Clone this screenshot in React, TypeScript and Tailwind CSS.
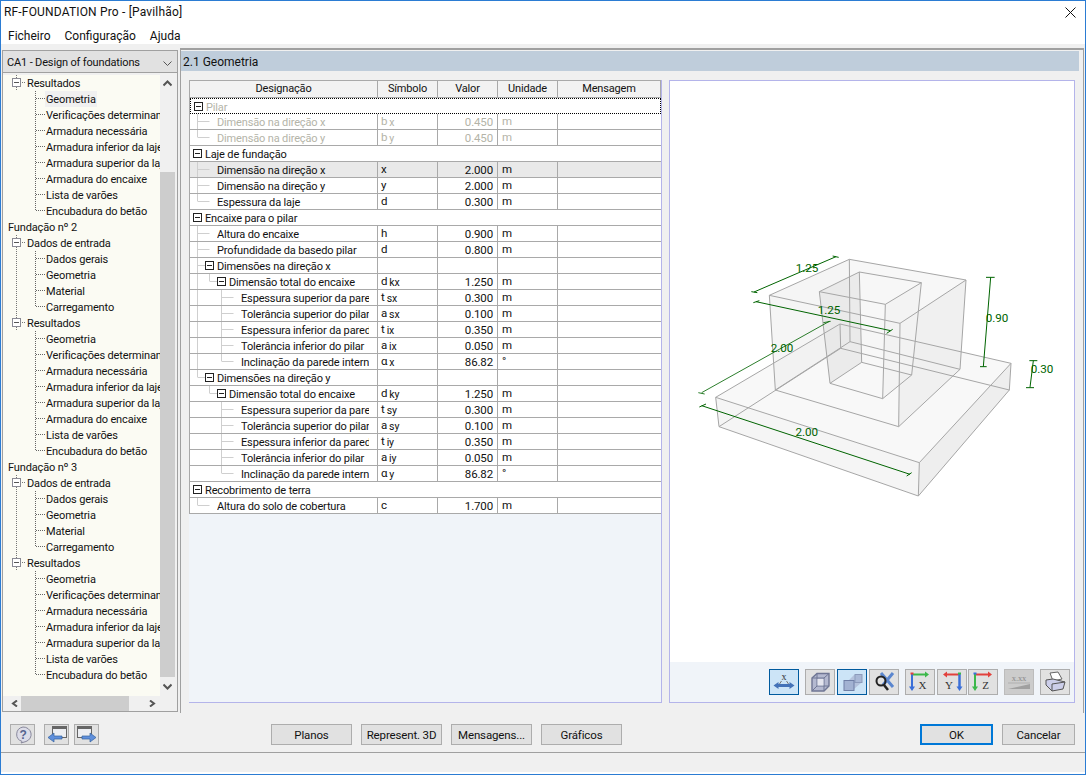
import type { ReactNode } from "react";

const results = [
  "Geometria",
  "Verificações determinantes",
  "Armadura necessária",
  "Armadura inferior da laje",
  "Armadura superior da laje",
  "Armadura do encaixe",
  "Lista de varões",
  "Encubadura do betão",
];
const inputs = ["Dados gerais", "Geometria", "Material", "Carregamento"];

type TreeRow = { text: string; kind: "root" | "group" | "leaf"; last?: boolean; outer?: boolean; selected?: boolean };

function foundation(n: number, items: string[]): TreeRow[] {
  return [
    { text: `Fundação nº ${n}`, kind: "root" },
    { text: "Dados de entrada", kind: "group" },
    ...inputs.map((t, i) => ({ text: t, kind: "leaf" as const, outer: true, last: i === inputs.length - 1 })),
    { text: "Resultados", kind: "group" },
    ...items.map((t, i) => ({ text: t, kind: "leaf" as const, last: i === items.length - 1 })),
  ];
}

const treeRows: TreeRow[] = [
  { text: "Resultados", kind: "group" },
  ...results.map((t, i) => ({ text: t, kind: "leaf" as const, selected: i === 0, last: i === results.length - 1 })),
  ...foundation(2, results),
  ...foundation(3, results.filter((t) => t !== "Armadura do encaixe")),
];

type Row = {
  name: string;
  level: 0 | 1 | 2 | 3;
  group?: boolean;
  last?: boolean;
  cont?: boolean;
  sym?: string;
  sub?: string;
  value?: string;
  unit?: string;
  faded?: boolean;
  hilite?: boolean;
  focus?: boolean;
};

const detail = (axis: "x" | "y", k: string): Row[] => [
  { name: `Dimensões na direção ${axis}`, level: 1, group: true, last: axis === "y" },
  { name: "Dimensão total do encaixe", level: 2, group: true, last: true, cont: axis === "x", sym: "d", sub: `k${axis}`, value: "1.250", unit: "m" },
  { name: "Espessura superior da parede", level: 3, cont: axis === "x", sym: "t", sub: `s${axis}`, value: "0.300", unit: "m" },
  { name: "Tolerância superior do pilar", level: 3, cont: axis === "x", sym: "a", sub: `s${axis}`, value: "0.100", unit: "m" },
  { name: "Espessura inferior da parede", level: 3, cont: axis === "x", sym: "t", sub: `i${axis}`, value: "0.350", unit: "m" },
  { name: "Tolerância inferior do pilar", level: 3, cont: axis === "x", sym: "a", sub: `i${axis}`, value: "0.050", unit: "m" },
  { name: "Inclinação da parede interna", level: 3, last: true, cont: axis === "x", sym: "α", sub: k, value: "86.82", unit: "°" },
];

const rows: Row[] = [
  { name: "Pilar", level: 0, group: true, faded: true, focus: true },
  { name: "Dimensão na direção x", level: 1, sym: "b", sub: "x", value: "0.450", unit: "m", faded: true },
  { name: "Dimensão na direção y", level: 1, last: true, sym: "b", sub: "y", value: "0.450", unit: "m", faded: true },
  { name: "Laje de fundação", level: 0, group: true },
  { name: "Dimensão na direção x", level: 1, sym: "x", value: "2.000", unit: "m", hilite: true },
  { name: "Dimensão na direção y", level: 1, sym: "y", value: "2.000", unit: "m" },
  { name: "Espessura da laje", level: 1, last: true, sym: "d", value: "0.300", unit: "m" },
  { name: "Encaixe para o pilar", level: 0, group: true },
  { name: "Altura do encaixe", level: 1, sym: "h", value: "0.900", unit: "m" },
  { name: "Profundidade da basedo pilar", level: 1, sym: "d", value: "0.800", unit: "m" },
  ...detail("x", "x"),
  ...detail("y", "y"),
  { name: "Recobrimento de terra", level: 0, group: true },
  { name: "Altura do solo de cobertura", level: 1, last: true, sym: "c", value: "1.700", unit: "m" },
];

function Box({ x, dark }: { x: number; dark?: boolean }) {
  return (
    <>
      <rect x={x + 0.5} y={3.5} width={8} height={8} fill="#fff" stroke={dark ? "#222" : "#8a8a94"} />
      <path d={`M${x + 2} 7.5h5`} stroke={dark ? "#222" : "#555"} />
    </>
  );
}

function TreeGlyph({ row }: { row: TreeRow }) {
  if (row.kind === "root") return <span className="w-[5px] shrink-0" />;
  if (row.kind === "group") {
    return (
      <svg width="24" height="16" className="shrink-0">
        <path d="M13.5 0v3M13.5 12v4M19 7.5h4" stroke="#777" strokeDasharray="1 1" fill="none" />
        <Box x={9} />
      </svg>
    );
  }
  return (
    <svg width="43" height="16" className="shrink-0">
      {row.outer && <path d="M13.5 0v16" stroke="#777" strokeDasharray="1 1" fill="none" />}
      <path d={`M32.5 0v${row.last ? 8 : 16}M33 7.5h9`} stroke="#666" strokeDasharray="1 1" fill="none" />
    </svg>
  );
}

function TableGlyph({ row }: { row: Row }) {
  const stroke = "#cfcfcf";
  if (row.level === 0) {
    return (
      <svg width="15" height="15" className="shrink-0">
        <Box x={3} dark />
      </svg>
    );
  }
  const width = row.level === 1 ? 27 : row.level === 2 ? 39 : 51;
  const parent = row.level === 1 ? 7.5 : row.level === 2 ? 19.5 : 31.5;
  const end = row.group ? parent + 8 : parent + 12;
  return (
    <svg width={width} height="15" className="shrink-0">
      {row.cont && <path d="M7.5 0v15" stroke={stroke} />}
      <path d={`M${parent} 0v${row.last ? 7 : 15}M${parent} 7.5H${end}`} stroke={stroke} fill="none" />
      {row.group && <Box x={parent + 7.5} dark />}
    </svg>
  );
}

function TableRow({ row }: { row: Row }) {
  const tone = row.faded ? "text-[#b4b4a8]" : "text-[#111]";
  const bg = row.hilite ? "bg-[#e9e9e9]" : "bg-white";
  if (row.group && row.level === 0) {
    return (
      <div
        className={`col-span-5 flex h-4 items-start whitespace-nowrap ${tone} ${bg} ${
          row.focus ? "border border-dotted border-black" : "border-b border-[#a9a9a9]"
        }`}
      >
        <TableGlyph row={row} />
        <span className="h-[14px] leading-[18px]">{row.name}</span>
      </div>
    );
  }
  const cell = `h-4 border-b border-r border-[#a9a9a9] ${bg} ${tone}`;
  return (
    <>
      <div className={`${cell} flex items-start overflow-hidden whitespace-nowrap pr-[8px]`}>
        <TableGlyph row={row} />
        <span className="h-[15px] min-w-0 flex-1 overflow-hidden leading-[17px]">{row.name}</span>
      </div>
      <div className={`${cell} pl-[3px] text-[11.5px] leading-[15px]`}>
        {row.sym}
        {row.sub && <span className="relative top-px ml-[2px] text-[10.5px] leading-none">{row.sub}</span>}
      </div>
      <div className={`${cell} pr-[4px] text-right text-[11.5px] leading-[17px]`}>{row.value}</div>
      <div className={`${cell} pl-[4px] text-[11.5px] leading-[15px]`}>{row.unit}</div>
      <div className={`h-4 border-b border-[#a9a9a9] ${bg}`} />
    </>
  );
}

function Model() {
  const edge = "#a6a6a6";
  const dim = "#006400";
  return (
    <svg viewBox="0 0 1200 810" width="400" height="270" className="ml-[10px] mt-[159px] block">
      <g stroke="none">
        <polygon points="107,472 718,668 993,370 480,252" fill="#f8f8f8" />
        <polygon points="107,472 718,668 715,768 117,560" fill="#f5f5f5" />
        <polygon points="718,668 993,370 988,450 715,768" fill="#eeeeee" />
        <polygon points="268,166 508,58 510,305 286,450" fill="#eeeeee" fillOpacity="0.6" />
        <polygon points="508,58 858,120 840,388 510,305" fill="#f2f2f2" fillOpacity="0.6" />
        <polygon points="660,250 858,120 840,388 656,560" fill="#ececec" fillOpacity="0.7" />
        <polygon points="418,155 538,96 545,367 450,430" fill="#e6e6e6" fillOpacity="0.7" />
        <polygon points="538,96 724,128 695,405 545,367" fill="#f6f6f6" fillOpacity="0.8" />
        <polygon points="616,193 724,128 695,405 608,476" fill="#f0f0f0" fillOpacity="0.6" />
      </g>
      <g fill="none" stroke={edge} strokeWidth="3">
        <path d="M107 472L718 668L993 370L480 252L107 472M107 472L117 560L715 768L988 450L993 370M718 668L715 768" />
        <path d="M117 560L482 325L988 450M480 252L482 325" />
        <path d="M268 166L660 250L858 120L508 58L268 166M268 166L286 450L656 560L840 388L858 120M660 250L656 560M508 58L510 305M286 450L510 305L840 388" />
        <path d="M418 155L616 193L724 128L538 96L418 155M418 155L450 430L608 476L695 405L724 128M616 193L608 476M538 96L545 367M450 430L545 367L695 405" />
      </g>
      <g fill="none" stroke={dim} strokeWidth="3">
        <path d="M222 156L468 50M214 155L232 158M458 48L476 52" />
        <path d="M228 185L632 272M220 188L238 182M620 280L638 268" />
        <path d="M65 458L448 244M55 458L74 462M430 248L452 244" strokeWidth="2.5" />
        <path d="M65 497L690 703M58 501L78 492M680 708L695 698" />
        <path d="M932 112L910 380M918 112L944 112M900 380L920 380" />
        <path d="M1060 362L1050 442M1048 362L1072 362M1038 443L1062 443" />
      </g>
      <g fill={dim} fontSize="35" stroke="none" textAnchor="middle">
        <text x="381" y="96">1.25</text>
        <text x="447" y="222">1.25</text>
        <text x="306" y="336">2.00</text>
        <text x="380" y="588">2.00</text>
        <text x="951" y="246">0.90</text>
        <text x="1086" y="398">0.30</text>
      </g>
    </svg>
  );
}

function ToolButton({ children, active, disabled, className = "" }: { children: ReactNode; active?: boolean; disabled?: boolean; className?: string }) {
  const look = active
    ? "border border-[#005a9e] bg-[#cce4f7]"
    : disabled
      ? "border border-[#bcbcbc] bg-[#cccccc]"
      : "border border-[#adadad] bg-[#e1e1e1]";
  return <div className={`flex h-[26px] w-[30px] items-center justify-center ${look} ${className}`}>{children}</div>;
}

const serif = "'Liberation Serif', serif";
const RED = "#e2403c";
const GREEN = "#3cb84a";
const BLUE = "#3a6fd8";

function AxesX() {
  return (
    <svg width="26" height="22" viewBox="0 0 26 22">
      <path d="M5 3.5H18" stroke={GREEN} strokeWidth="2" />
      <path d="M22 3.5l-4-3v6z" fill={GREEN} />
      <path d="M5 3v13" stroke={BLUE} strokeWidth="2" />
      <path d="M5 20l-3-4.5h6z" fill={BLUE} />
      <path d="M3.5 2.5h3" stroke={RED} strokeWidth="2" />
      <text x="15.5" y="18" fontSize="11" fontFamily={serif} textAnchor="middle" fill="#333">X</text>
    </svg>
  );
}

function AxesY() {
  return (
    <svg width="26" height="22" viewBox="0 0 26 22">
      <path d="M8 3.5H21" stroke={RED} strokeWidth="2" />
      <path d="M4 3.5l4-3v6z" fill={RED} />
      <path d="M20.5 3v13" stroke={BLUE} strokeWidth="2.5" />
      <path d="M20.5 20l-3-4.5h6z" fill={BLUE} />
      <path d="M19 2.5h3" stroke={GREEN} strokeWidth="2" />
      <text x="10" y="18" fontSize="11" fontFamily={serif} textAnchor="middle" fill="#333">Y</text>
    </svg>
  );
}

function AxesZ() {
  return (
    <svg width="26" height="22" viewBox="0 0 26 22">
      <path d="M5 3.5H18" stroke={RED} strokeWidth="2" />
      <path d="M22 3.5l-4-3v6z" fill={RED} />
      <path d="M5 3v13" stroke={GREEN} strokeWidth="2" />
      <path d="M5 20l-3-4.5h6z" fill={GREEN} />
      <path d="M3.5 2.5h3" stroke={BLUE} strokeWidth="2" />
      <text x="15.5" y="18" fontSize="11" fontFamily={serif} textAnchor="middle" fill="#333">Z</text>
    </svg>
  );
}

function Toolbar() {
  return (
    <div className="flex h-[41px] items-start justify-end bg-[#f0f4f9] pr-[4px] pt-[7px]">
      <ToolButton active>
        <svg width="24" height="22" viewBox="0 0 24 22">
          <text x="12" y="9" fontSize="10" fontFamily={serif} textAnchor="middle" fill="#333">x</text>
          <path d="M9.5 10l-2 3M14.5 10l2 3" stroke="#777" />
          <path d="M4 14.5h16" stroke="#4472b8" strokeWidth="3" />
          <path d="M1.5 14.5l5-3.5v7zM22.5 14.5l-5-3.5v7z" fill="#4472b8" />
        </svg>
      </ToolButton>
      <ToolButton className="ml-[6px]">
        <svg width="22" height="22" viewBox="0 0 22 22">
          <path d="M3 7L8 2.5H20V15L15 20H3Z" fill="#b4b9d0" stroke="#6f7694" strokeWidth="1.4" />
          <path d="M3 7H15V20M15 7L20 2.5M3 20L8 15V2.5M8 15H20" fill="none" stroke="#6f7694" strokeWidth="1" />
          <rect x="8.5" y="8" width="6" height="6.5" fill="#e4e5ee" />
        </svg>
      </ToolButton>
      <ToolButton active className="ml-[2px]">
        <svg width="24" height="22" viewBox="0 0 24 22">
          <path d="M8 10L14 4H21V12L14 18H8Z" fill="#b4c2dc" />
          <rect x="15" y="3.5" width="7" height="8" fill="#a9b8d6" stroke="#8c9bbb" />
          <rect x="4" y="9.5" width="10" height="10" fill="#a2b2d2" stroke="#6f7fa6" />
        </svg>
      </ToolButton>
      <ToolButton className="ml-[2px]">
        <svg width="24" height="22" viewBox="0 0 24 22">
          <path d="M9 2L21 16M21 2L11 14" stroke="#5a86cf" strokeWidth="3" />
          <circle cx="9" cy="10" r="4.5" fill="none" stroke="#222" strokeWidth="2" />
          <path d="M12 14l4 5" stroke="#222" strokeWidth="2.5" />
        </svg>
      </ToolButton>
      <ToolButton className="ml-[6px]"><AxesX /></ToolButton>
      <ToolButton className="ml-[2px]"><AxesY /></ToolButton>
      <ToolButton className="ml-px"><AxesZ /></ToolButton>
      <ToolButton disabled className="ml-[6px]">
        <svg width="26" height="22" viewBox="0 0 26 22">
          <text x="13" y="10" fontSize="8.5" fontFamily={serif} textAnchor="middle" fill="#8a8a8a">x.xx</text>
          <path d="M2 18L24 13V18Z" fill="#a0a0a0" />
          <path d="M2 12H24" stroke="#b0b0b0" />
        </svg>
      </ToolButton>
      <ToolButton className="ml-[6px]">
        <svg width="24" height="22" viewBox="0 0 24 22">
          <path d="M7 2L15 1L19 8L10 10Z" fill="#fff" stroke="#666" />
          <path d="M3 9L10 8L22 11L20 18L9 20L3 14Z" fill="#ccceea" stroke="#555" />
          <path d="M9 13L22 11M9 13V20" stroke="#555" fill="none" />
        </svg>
      </ToolButton>
    </div>
  );
}

function NavIcon({ right }: { right?: boolean }) {
  return (
    <svg width="22" height="19" viewBox="0 0 22 19">
      <rect x={right ? 1.5 : 6.5} y="1.5" width="14" height="11" fill="#eceef2" stroke="#666" />
      <rect x={right ? 1.5 : 6.5} y="1.5" width="14" height="2.5" fill="#666" />
      <path
        d={right ? "M6 11h8V8l6 4.5-6 4.5v-3H6z" : "M16 11H8V8l-6 4.5L8 17v-3h8z"}
        fill="#5f8fdc"
        stroke="#33619f"
        strokeWidth="0.7"
      />
    </svg>
  );
}

function DialogButton({ children, className = "", primary }: { children: ReactNode; className?: string; primary?: boolean }) {
  return (
    <div
      className={`flex h-[21px] items-center justify-center bg-[#e1e1e1] pt-[2px] text-[11.5px] text-[#111] ${
        primary ? "border-2 border-[#0078d7]" : "border border-[#adadad]"
      } ${className}`}
    >
      {children}
    </div>
  );
}

function Chevron({ d, thin }: { d: string; thin?: boolean }) {
  return (
    <svg width="9" height="7" viewBox="0 0 9 7" className="shrink-0">
      <path d={d} fill="none" stroke="#555" strokeWidth={thin ? 1 : 2} />
    </svg>
  );
}

export default function App() {
  return (
    <div className="flex h-[775px] w-[1086px] flex-col overflow-hidden border-x border-t border-[#2b7cd3] bg-[#f0f0f0] font-['Roboto',sans-serif] text-[11px] tracking-[-0.15px] text-[#111]">
      {/* title + menu */}
      <div className="flex h-[22px] shrink-0 items-center justify-between bg-white pl-[3px] pr-[9px] text-[12px] tracking-[0.17px]">
        <span>RF-FOUNDATION Pro - [Pavilhão]</span>
        <svg width="11" height="11" viewBox="0 0 11 11">
          <path d="M0.5 0.5L10.5 10.5M10.5 0.5L0.5 10.5" stroke="#111" />
        </svg>
      </div>
      <div className="flex h-[21px] shrink-0 items-center gap-[14px] bg-white pl-[7px] pt-[5px] text-[12px] tracking-normal">
        <span>Ficheiro</span>
        <span>Configuração</span>
        <span>Ajuda</span>
      </div>

      <div className="flex h-[669px] shrink-0 pt-[4px]">
        {/* left panel */}
        <div className="ml-px mt-[2px] flex h-[662px] w-[176px] flex-col border border-[#a0a0a0]">
          <div className="flex h-[22px] shrink-0 items-center justify-between border-b border-[#a0a0a0] bg-[#e1e1e1] pl-[4px] pr-[5px] pt-[3px]">
            <span>CA1 - Design of foundations</span>
            <Chevron thin d="M0.5 1.5L4.5 5.5L8.5 1.5" />
          </div>
          <div className="mt-[2px] flex min-h-0 flex-1 pr-[2px]">
            <div className="min-w-0 flex-1 overflow-hidden bg-[#fbfbf3]">
              {treeRows.map((row, i) => (
                <div key={i} className="flex h-4 items-start overflow-hidden whitespace-nowrap">
                  <TreeGlyph row={row} />
                  <span className={`h-4 leading-[18px] ${row.selected ? "-mx-px bg-[#f0f0f0] px-px" : ""}`}>{row.text}</span>
                </div>
              ))}
            </div>
            <div className="flex w-[15px] shrink-0 flex-col items-center pt-[5px]">
              <Chevron d="M0.5 5.5L4.5 1.5L8.5 5.5" />
              <div className="mt-[85px] h-[505px] w-[15px] shrink-0 bg-[#cdcdcd]" />
              <div className="mt-[6px]">
                <Chevron d="M0.5 1.5L4.5 5.5L8.5 1.5" />
              </div>
            </div>
          </div>
          <div className="flex h-[15px] shrink-0 items-center pl-[8px]">
            <Chevron d="M6 0.5L2 3.5L6 6.5" />
            <div className="ml-px h-[15px] w-[108px] bg-[#cdcdcd]" />
            <span className="ml-[18px]">
              <Chevron d="M3 0.5L7 3.5L3 6.5" />
            </span>
          </div>
        </div>

        {/* right panel */}
        <div className="ml-[2px] flex h-[665px] w-[904px] flex-col border-l border-r border-t-2 border-[#a0a0a0]">
          <div className="mr-[4px] mt-px flex h-[20px] shrink-0 items-center bg-[#bfcddb] pl-[2px] pt-[2px] text-[12px] tracking-normal">
            2.1 Geometria
          </div>
          <div className="flex min-h-0 flex-1 pl-[8px] pt-[9px]">
            <div className="h-[623px] w-[473px] border-b border-r border-[#b4b4ea] bg-[#f0f4f9]">
              <div className="grid grid-cols-[188px_60px_60px_60px_103px] border-l border-[#a9a9a9]">
                {["Designação", "Símbolo", "Valor", "Unidade", "Mensagem"].map((h) => (
                  <div key={h} className="flex h-[18px] items-center justify-center border-b border-r border-t border-[#a9a9a9] bg-[#f2f2f2]">
                    {h}
                  </div>
                ))}
                {rows.map((row, i) => (
                  <TableRow key={i} row={row} />
                ))}
              </div>
            </div>
            <div className="ml-[7px] flex h-[623px] w-[406px] flex-col border border-[#b4b4ea] bg-[#f0f4f9]">
              <div className="h-[581px] shrink-0 overflow-hidden bg-white">
                <Model />
              </div>
              <Toolbar />
            </div>
          </div>
        </div>
      </div>

      {/* dialog buttons */}
      <div className="flex h-[39px] shrink-0 items-start pl-[9px] pt-[11px]">
        <ToolButton className="!h-[21px] !w-[25px]">
          <svg width="18" height="18" viewBox="0 0 18 18">
            <path d="M9 1a8 7.5 0 0 1 3 14.5L7 17l1-1.6A8 7.5 0 0 1 9 1z" fill="#dcdce8" stroke="#88889c" />
            <text x="9" y="13" fontSize="12" fontWeight="700" textAnchor="middle" fontFamily="'Liberation Sans', sans-serif" fill="#56648f">?</text>
          </svg>
        </ToolButton>
        <ToolButton className="ml-[9px] !h-[21px] !w-[25px]"><NavIcon /></ToolButton>
        <ToolButton className="ml-[5px] !h-[21px] !w-[25px]"><NavIcon right /></ToolButton>
        <DialogButton className="ml-[172px] w-[81px]">Planos</DialogButton>
        <DialogButton className="ml-[9px] w-[81px]">Represent. 3D</DialogButton>
        <DialogButton className="ml-[9px] w-[81px]">Mensagens...</DialogButton>
        <DialogButton className="ml-[9px] w-[81px]">Gráficos</DialogButton>
        <DialogButton primary className="ml-[298px] w-[73px]">OK</DialogButton>
        <DialogButton className="ml-[9px] w-[73px]">Cancelar</DialogButton>
      </div>

      {/* status bar */}
      <div className="h-[20px] shrink-0 border-t border-[#a0a0a0] bg-[#f0f0f0]" />
      <div className="h-[2px] shrink-0 bg-white" />
      <div className="h-px shrink-0 bg-[#2b7cd3]" />
    </div>
  );
}
